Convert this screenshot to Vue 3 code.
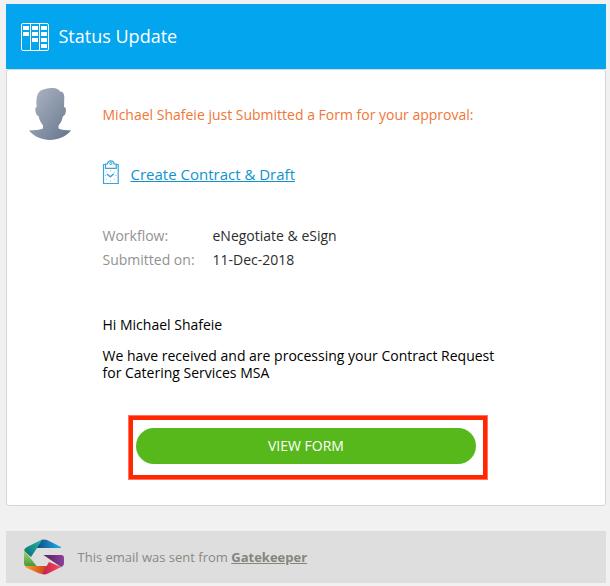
<script setup>
const details = [
  { label: 'Workflow:', value: 'eNegotiate & eSign' },
  { label: 'Submitted on:', value: '11-Dec-2018' },
]
const cells = [
  [23, 26], [23, 32],
  [32, 26], [32, 32], [32, 38],
  [41, 26], [41, 32], [41, 38], [41, 44],
]
</script>

<template>
  <div class="page">
    <header class="header">
      <svg class="board" width="28" height="28" viewBox="21 23 28 28">
        <g fill="none" stroke="#fff">
          <rect x="21.5" y="23.5" width="27" height="27" rx="1.5" />
          <path d="M30.5 24V50M39.5 24V50" />
        </g>
        <rect v-for="(c, i) in cells" :key="i" :x="c[0]" :y="c[1]" width="6" height="4" fill="#fff" />
      </svg>
      <h1 class="title"><span>Status Update</span></h1>
    </header>

    <main class="card">
      <svg class="avatar" width="44" height="54" viewBox="0 0 44 54">
        <defs>
          <linearGradient id="skin" x1="0" y1="0" x2="1" y2="1">
            <stop offset="0" stop-color="#b0b8c6" />
            <stop offset="1" stop-color="#64748c" />
          </linearGradient>
        </defs>
        <path
          fill="url(#skin)"
          d="M8.700 20C8 14 8.500 8 11 5C14 2 20 1 25 1C28 1 31 2.500 32 4.500C35 4.500 36.300 6.500 36.300 10L36 20C38.300 20 38.500 24 37 27.500C36.300 29 35 28.700 34.700 30C34 34.500 31.500 37 30.500 38.500V41.500C34 43.300 38 43.300 43 43.500C33 56 11 56 1 43.500C6 43.300 11 43 15 41.500V38.500C13 36 11.500 33.500 10.500 29C7.500 28.500 6 20 8.700 20Z"
        />
      </svg>
      <section class="content">
        <p class="notice"><span>Michael Shafeie just Submitted a Form for your approval:</span></p>
        <div class="form-row">
          <svg width="17" height="25" viewBox="0 0 17 25" fill="none" stroke="#3aa5d8">
            <path d="M3 4.500H1.500V23.500H16.200V4.500H14" stroke-width="1.200" />
            <path d="M3.500 4H5.500C5.800 -.2 11.800 -.2 12 4H14.200V8.300H3.500Z" stroke-width="1.200" />
            <circle cx="8.800" cy="3.500" r="1.100" />
            <path d="M4.800 14L8.300 16.800L11.800 13.800" stroke-width="1.500" />
            <path d="M8.500 10.500V11.500M8.500 20.500V21.500M2.800 15.500H3.800M13.500 15.500H14.500M4.300 12H5M12.200 12H13M4.300 19.500H5M12.200 19.500H13" stroke="#79c3e4" />
          </svg>
          <a class="form-link">Create Contract &amp; Draft</a>
        </div>
        <dl class="details">
          <template v-for="d in details" :key="d.label">
            <dt><span>{{ d.label }}</span></dt>
            <dd><span>{{ d.value }}</span></dd>
          </template>
        </dl>
        <div class="message">
          <p>Hi Michael Shafeie</p>
          <p>We have received and are processing your Contract Request for Catering Services MSA</p>
        </div>
        <div class="highlight">
          <button class="view">VIEW FORM</button>
        </div>
      </section>
    </main>

    <footer class="footer">
      <svg class="logo" width="42" height="36" viewBox="0 0 42 36">
        <defs>
          <linearGradient id="blue"><stop offset="0" stop-color="#104a87" /><stop offset="1" stop-color="#20aee5" /></linearGradient>
          <linearGradient id="teal" x1="1" y1="0" x2="0" y2="1"><stop offset="0" stop-color="#2bbaa0" /><stop offset="1" stop-color="#086b78" /></linearGradient>
          <linearGradient id="green" x1="0" y1="0" x2="0" y2="1"><stop offset="0" stop-color="#b8d873" /><stop offset="1" stop-color="#3e9738" /></linearGradient>
          <linearGradient id="orange"><stop offset="0" stop-color="#ffa02e" /><stop offset="1" stop-color="#bd301d" /></linearGradient>
          <linearGradient id="pink"><stop offset="0" stop-color="#bd234d" /><stop offset="1" stop-color="#ff4858" /></linearGradient>
          <linearGradient id="purple"><stop offset="0" stop-color="#59205c" /><stop offset="1" stop-color="#8d419b" /></linearGradient>
        </defs>
        <path fill="url(#teal)" d="M20 0L4 8Q1 9.500 1 12L8 18L14 9L18 8Z" />
        <path fill="url(#blue)" d="M14 9L19 1Q21 0 24 1L38 8V9Z" />
        <path fill="url(#green)" d="M1 11L14 27.500H4Q1 27 1 24Z" />
        <path fill="url(#orange)" d="M2 27H27L20 35Q17 35 15 34L4 29Q2 28.500 2 27Z" />
        <path fill="url(#pink)" d="M19 35L26 23L38 28L25 34.500Q22 36 19 35Z" />
        <path fill="url(#purple)" d="M20.500 16H38Q41 16 41 19V24Q41 27 38 28Z" />
      </svg>
      <p class="sent">This email was sent from <a>Gatekeeper</a></p>
    </footer>
  </div>
</template>

<style>
body {
  background: #f1f1f1;
}
</style>

<style scoped>
.page {
  box-sizing: border-box;
  width: 610px;
  height: 586px;
  padding: 4px 4px 3px 6px;
  display: flex;
  flex-direction: column;
  font-family: 'Open Sans', sans-serif;
  font-size: 14px;
  background: #f1f1f1;
}
p, h1, dl, dd { margin: 0; }
.header {
  height: 65px;
  padding-left: 15px;
  display: flex;
  align-items: center;
  gap: 9.5px;
  background: #03a5ef;
  color: #fff;
}
.title {
  font-size: 18px;
  font-weight: 400;
  line-height: 24px;
  padding-bottom: 2px;
}
.card {
  box-sizing: border-box;
  height: 437px;
  border: 1px solid #d6d6d6;
  border-radius: 3px;
  background: #fff;
  display: flex;
  align-items: flex-start;
  padding: 17px 0 0 21px;
}
.avatar { flex: none; }
.content {
  margin-left: 30px;
  padding-top: 18px;
  width: 400px;
}
.notice {
  line-height: 20px;
  padding-left: 0.5px;
  color: #f07635;
  white-space: nowrap;
}
.form-row {
  display: flex;
  align-items: center;
  gap: 11.5px;
  height: 25px;
  margin-top: 35px;
}
.form-link {
  font-size: 15px;
  line-height: 22px;
  margin-top: 2px;
  color: #0f93cf;
  text-decoration: underline;
  white-space: nowrap;
}
.details {
  display: grid;
  grid-template-columns: 110px 1fr;
  line-height: 24px;
  margin-top: 39px;
  padding-left: 0.5px;
  white-space: nowrap;
}
dt { color: #929292; }
dd { color: #2c2c2c; }
.message {
  line-height: 17px;
  margin-top: 44px;
  padding-left: 0.5px;
  color: #000;
}
.message p + p { margin-top: 14px; }
.highlight {
  box-sizing: border-box;
  width: 360px;
  height: 65px;
  margin: 34px 0 0 26px;
  padding: 8px 6px 0 3px;
  border: 5px solid #ff2600;
  outline: 1px solid #ff9884b0;
  outline-offset: -1px;
}
.view {
  display: block;
  width: 340px;
  height: 36px;
  padding: 0;
  border: 0;
  border-radius: 18px;
  background: #57b81b;
  color: #fff;
  font: 14px/36px 'Open Sans', sans-serif;
}
.footer {
  height: 52px;
  margin-top: 25px;
  padding-left: 17px;
  display: flex;
  align-items: center;
  gap: 12.5px;
  background: #dedede;
  color: #898983;
  font-size: 13px;
}
.sent a {
  font-weight: 700;
  text-decoration: underline;
  color: #85857c;
}
</style>
